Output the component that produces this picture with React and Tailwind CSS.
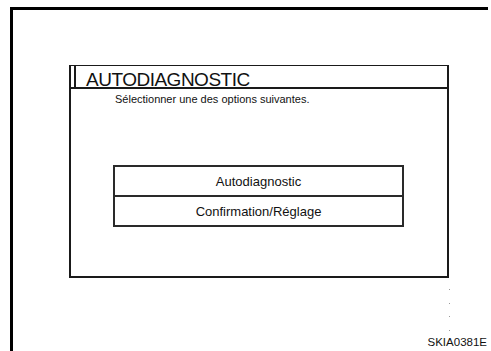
export default function App() {
  return (
    <div className="w-[491px] h-[351px] bg-white overflow-hidden font-['Liberation_Sans',Arial,sans-serif] text-[#111]">
      <div className="ml-[10px] mt-[7px] w-[478px] h-[344px] border-l-[3px] border-t-[3px] border-black">
        <div className="ml-[56px] mt-[55px] w-[380px] h-[213px] border-l-2 border-r-2 border-b-2 border-t border-[#1a1a1a] flex flex-col">
          <div className="h-[23px] flex border-b-2 border-[#1a1a1a]">
            <div className="w-[5px] border-r-2 border-[#1a1a1a]" />
            <div className="pl-[10px] pt-[4px] text-[19px] leading-[19px] tracking-[-0.5px]">AUTODIAGNOSTIC</div>
          </div>
          <div className="pl-[44px] pt-[4px] text-[11px] leading-[13px]">Sélectionner une des options suivantes.</div>
          <div className="ml-[42px] mt-[59px] w-[291px] border-2 border-[#2a2a2a] flex flex-col text-[13px] leading-[15px]">
            <div className="h-[30px] flex items-center justify-center border-b-2 border-[#2a2a2a]">Autodiagnostic</div>
            <div className="h-[28px] flex items-center justify-center">Confirmation/Réglage</div>
          </div>
        </div>
        <div className="ml-[436px] mt-[11px] flex flex-col gap-[12.5px] w-[1px]">
          <div className="w-[1px] h-[1px] bg-[#9a9a9a]" />
          <div className="w-[1px] h-[1px] bg-[#9a9a9a]" />
          <div className="w-[1px] h-[1px] bg-[#9a9a9a]" />
          <div className="w-[1px] h-[1px] bg-[#9a9a9a]" />
        </div>
        <div className="mt-[5px] pr-[1px] text-right text-[11.5px] leading-[13px]">SKIA0381E</div>
      </div>
    </div>
  );
}
